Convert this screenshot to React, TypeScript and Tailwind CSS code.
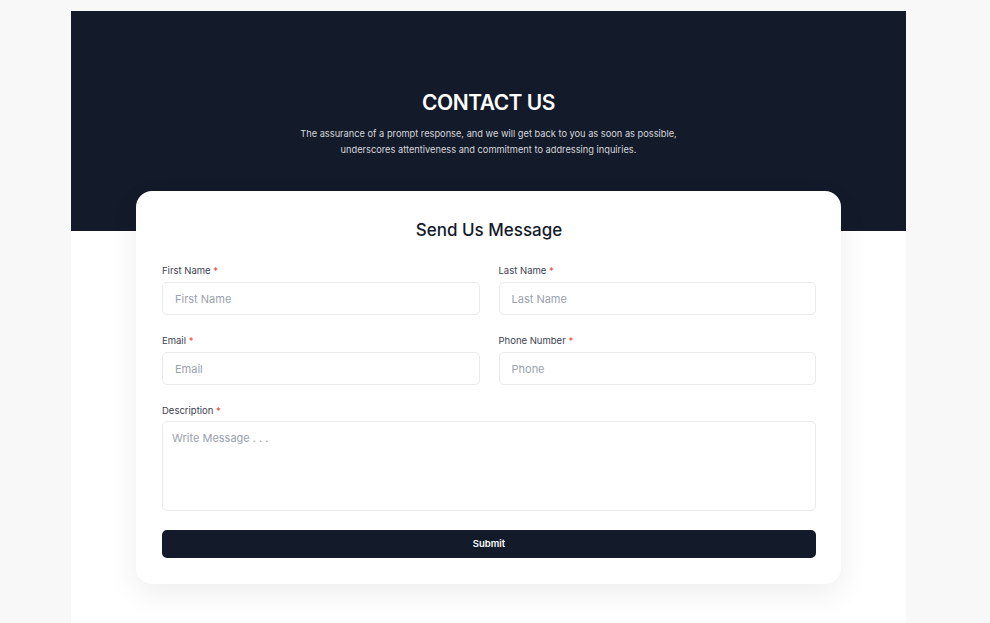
export default function App() {
  return (
    <div className="min-h-screen bg-[#f8f8f8] pt-[11px]" style={{ fontFamily: "Inter, 'Noto Sans', sans-serif" }}>
      <div className="ml-[71px] w-[835px] bg-white pb-[40px]">
        <div className="h-[220px] bg-[#131a29] pt-[79px] text-center">
          <h1 className="text-[21px] font-semibold leading-[26px] tracking-[-0.5px] text-white">CONTACT US</h1>
          <p className="mx-auto mt-[10px] w-[400px] text-[9.25px] leading-[16px] text-[#d6d8dd]">
            The assurance of a prompt response, and we will get back to you as soon as possible,
            underscores attentiveness and commitment to addressing inquiries.
          </p>
        </div>
        <div className="relative ml-[65px] -mt-[40px] w-[705px] rounded-[16px] bg-white pl-[26px] pr-[25px] pt-[25px] pb-[26px] shadow-[0_10px_30px_rgba(0,0,0,0.07)]">
          <h2 className="text-center text-[17px] font-medium leading-[28px] text-[#131a29]">Send Us Message</h2>
          <form className="mt-[20px] flex flex-col" onSubmit={(e) => e.preventDefault()}>
            <div className="grid grid-cols-2 gap-x-[19px] gap-y-[19px]">
              <Field label="First Name" placeholder="First Name" />
              <Field label="Last Name" placeholder="Last Name" />
              <Field label="Email" placeholder="Email" />
              <Field label="Phone Number" placeholder="Phone" />
            </div>
            <div className="mt-[19px]">
              <Label text="Description" />
              <textarea
                placeholder="Write Message . . ."
                className="mt-[3px] block h-[90px] w-full resize-none rounded-[5px] border border-[#e9eaed] px-[9px] py-[8px] text-[11px] text-[#131a29] outline-none placeholder:text-[#9aa1ad]"
              />
            </div>
            <button className="mt-[19px] h-[28px] w-full rounded-[5px] bg-[#131a29] text-[9.5px] font-semibold text-white">
              Submit
            </button>
          </form>
        </div>
      </div>
    </div>
  );
}

function Label({ text }: { text: string }) {
  return (
    <div className="text-[9.5px] leading-[14px] text-[#3b4250]">
      {text} <span className="text-[#ef4444]">*</span>
    </div>
  );
}

function Field({ label, placeholder }: { label: string; placeholder: string }) {
  return (
    <div>
      <Label text={label} />
      <input
        placeholder={placeholder}
        className="mt-[4px] block h-[33px] w-full rounded-[5px] border border-[#e9eaed] px-[12px] text-[11px] text-[#131a29] outline-none placeholder:text-[#9aa1ad]"
      />
    </div>
  );
}
